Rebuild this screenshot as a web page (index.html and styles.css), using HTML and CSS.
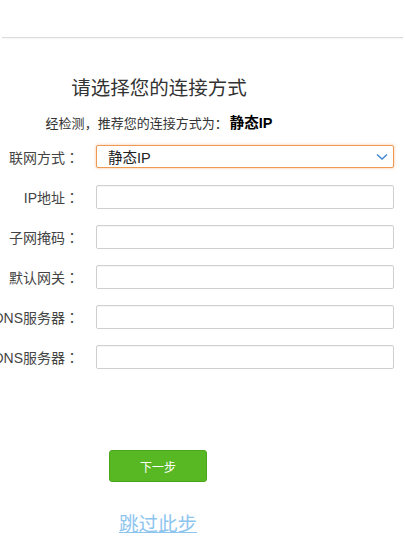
FILE: index.html
```html
<!DOCTYPE html>
<html lang="zh-CN">
<head>
<meta charset="utf-8">
<title>连接方式</title>
<link rel="stylesheet" href="styles.css">
</head>
<body>
<div class="topbar"></div>
<div class="intro">
  <h1 class="title">请选择您的连接方式</h1>
  <p class="subtitle">经检测<span class="p">，</span>推荐您的连接方式为<span class="p">：</span><b>静态IP</b></p>
</div>
<form class="form">
  <div class="row">
    <label class="label">联网方式<span class="p">：</span></label>
    <div class="field select">
      <span>静态IP</span>
      <svg class="chev" width="12" height="8" viewBox="0 0 12 8"><path d="M1 1.5 L6 6 L11 1.5" fill="none" stroke="#3f86d4" stroke-width="1.4"/></svg>
    </div>
  </div>
  <div class="row">
    <label class="label">IP地址<span class="p">：</span></label>
    <input class="field" type="text">
  </div>
  <div class="row">
    <label class="label">子网掩码<span class="p">：</span></label>
    <input class="field" type="text">
  </div>
  <div class="row">
    <label class="label">默认网关<span class="p">：</span></label>
    <input class="field" type="text">
  </div>
  <div class="row">
    <label class="label">首选DNS服务器<span class="p">：</span></label>
    <input class="field" type="text">
  </div>
  <div class="row">
    <label class="label">备用DNS服务器<span class="p">：</span></label>
    <input class="field" type="text">
  </div>
</form>
<div class="actions">
  <button class="next" type="button">下一步</button>
  <a class="skip" href="#">跳过此步</a>
</div>
</body>
</html>
```
FILE: styles.css
```css
html, body {
  margin: 0;
  padding: 0;
  background: #fff;
  overflow: hidden;
}
body {
  font-family: "Liberation Sans", "Noto Sans CJK SC", sans-serif;
  color: #333;
  width: 405px;
  height: 543px;
}
.p {
  font-family: "Noto Sans CJK TC", sans-serif;
}
.topbar {
  height: 37px;
  margin: 0 2px;
  border-bottom: 1px solid #dcdcdc;
  box-shadow: 0 1px 1px rgba(0,0,0,0.03);
}
.intro {
  width: 318px;
  text-align: center;
  padding-top: 38px;
}
.title {
  margin: 0;
  font-size: 19.5px;
  line-height: 24px;
  font-weight: normal;
  color: #333;
}
.subtitle {
  margin: 13px 0 0;
  font-size: 13px;
  line-height: 20px;
  color: #333;
}
.subtitle b {
  font-size: 14.5px;
  color: #000;
  margin-left: 2px;
}
.form {
  margin-top: 11px;
  display: flex;
  flex-direction: column;
  gap: 16px;
}
.row {
  display: flex;
  align-items: center;
  gap: 17px;
  height: 24px;
}
.label {
  width: 79px;
  flex: none;
  display: flex;
  justify-content: flex-end;
  white-space: nowrap;
  font-size: 14px;
  color: #444;
}
.field {
  box-sizing: border-box;
  width: 298px;
  height: 24px;
  margin: 0;
  border: 1px solid #cfcfcf;
  border-radius: 2px;
  background: #fff;
  font: inherit;
  padding: 0 8px;
  box-shadow: inset 0 1px 1px rgba(0,0,0,0.04);
}
.select {
  height: 23px;
  margin-top: -1px;
  border-color: #ee9a55;
  box-shadow: 0 0 3px rgba(240,140,60,0.55);
  display: flex;
  align-items: center;
  justify-content: space-between;
  padding: 0 5px 0 11px;
  font-size: 14.5px;
  color: #222;
}
.chev {
  display: block;
}
.actions {
  width: 316px;
  margin-top: 81px;
  display: flex;
  flex-direction: column;
  align-items: center;
}
.next {
  width: 98px;
  height: 32px;
  margin: 0;
  border: 1px solid #4aa51a;
  border-radius: 3px;
  background: #58b823;
  color: #fff;
  font-family: inherit;
  font-size: 12px;
}
.skip {
  margin-top: 30px;
  font-size: 19.5px;
  line-height: 24px;
  color: #8ec5ef;
  text-decoration: underline;
}
```
